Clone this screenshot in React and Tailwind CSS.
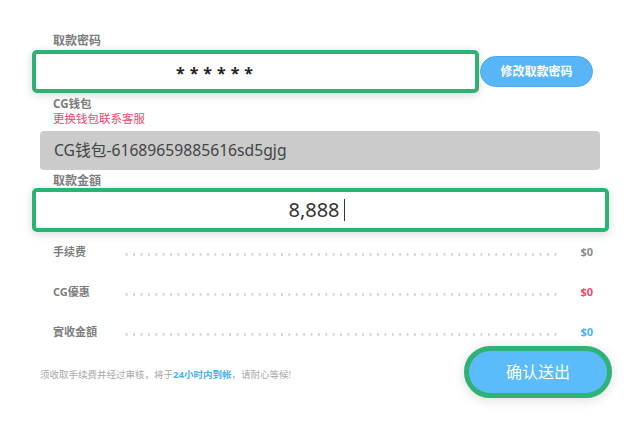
export default function App() {
  const font = { fontFamily: '"Noto Sans", "Noto Sans CJK SC", sans-serif' };
  const rows = [
    { label: '手续费', value: '$0', color: 'text-[#8a8a8a]' },
    { label: 'CG優惠', value: '$0', color: 'text-[#f2486d]' },
    { label: '實收金額', value: '$0', color: 'text-[#47b2f7]' },
  ];

  return (
    <div style={font} className="w-[638px] h-[433px] bg-white flex flex-col pt-[34px]">
      <div className="ml-[53px] text-[12px] leading-[14px] font-bold text-[#7d7d7d]">取款密码</div>
      <div className="flex items-center mt-[2px] ml-[32px]">
        <div className="w-[447px] h-[43px] border-4 border-[#2cb273] rounded-[5px] bg-white shadow-[0_2px_10px_rgba(0,0,0,0.16)] flex items-center pl-[140px]">
          <span className="text-[16px] font-bold text-[#222] tracking-[5px] mt-[2px]">******</span>
        </div>
        <button className="ml-[1px] w-[113px] h-[31px] rounded-full bg-[#58b6f8] border border-[#4aa9ef] text-white text-[12px] font-bold">修改取款密码</button>
      </div>

      <div className="ml-[53px] mt-[4px] text-[11.5px] leading-[14px] font-bold text-[#7d7d7d]">CG钱包</div>
      <div className="ml-[53px] mt-[1px] text-[11.5px] leading-[14px] text-[#f0466c]">更换钱包联系客服</div>

      <div className="ml-[40px] mt-[5px] w-[560px] h-[39px] rounded-[4px] bg-[#cbcbcb] flex items-center pl-[14px] text-[15.7px] text-[#444]">
        CG钱包-61689659885616sd5gjg
      </div>

      <div className="ml-[53px] mt-[4px] text-[12px] leading-[14px] font-bold text-[#7d7d7d]">取款金額</div>
      <div className="ml-[32px] w-[577px] h-[44px] border-4 border-[#2cb273] rounded-[5px] bg-white shadow-[0_2px_10px_rgba(0,0,0,0.16)] flex items-center justify-center">
        <span className="text-[20px] text-[#333] ml-[-8px]">8,888</span>
        <span className="ml-[4px] w-[1px] h-[22px] bg-[#333]"></span>
      </div>

      <div className="flex flex-col gap-[20px] mt-[10px]">
        {rows.map((r) => (
          <div key={r.label} className="flex items-center h-[20px] ml-[53px] w-[540px]">
            <div className="w-[70px] text-[11px] font-bold text-[#7d7d7d]">{r.label}</div>
            <div className="flex-1 h-[3px] mt-[4px] bg-[radial-gradient(circle,#cfcfcf_1px,transparent_1.4px)] bg-[length:7.4px_3px]"></div>
            <div className={`w-[34px] text-right text-[11px] font-bold ${r.color}`}>{r.value}</div>
          </div>
        ))}
      </div>

      <div className="flex items-center mt-[4px]">
        <div className="ml-[40px] mt-[6px] text-[9.5px] text-[#a8a8a8] w-[424px]">
          须收取手续费并经过审核，将于<span className="text-[#47b2f7] font-bold">24小时内到帐</span>，请耐心等候!
        </div>
        <button className="w-[148px] h-[52px] rounded-full border-[5px] border-[#2fb276] bg-[#5bbbfb] text-white text-[16px] shadow-[0_2px_12px_rgba(0,0,0,0.14)]">确认送出</button>
      </div>
    </div>
  );
}
